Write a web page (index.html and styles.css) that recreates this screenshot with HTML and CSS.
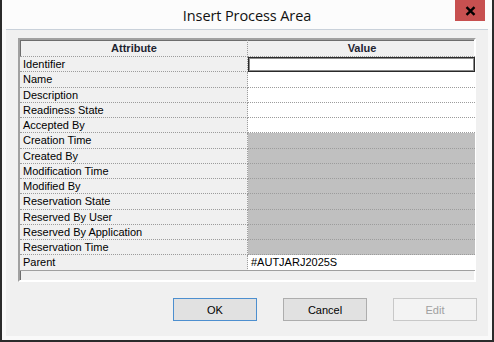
FILE: index.html
```html
<!DOCTYPE html>
<html lang="en">
<head>
    <meta charset="UTF-8">
    <meta name="viewport" content="width=device-width, initial-scale=1.0">
    <title>Insert Process Area</title>
    <link rel="stylesheet" href="styles.css">
</head>
<body>
    <div class="window">
        <div class="titlebar">
            <span class="title">Insert Process Area</span>
            <button class="close" type="button" aria-label="Close">
                <svg width="11" height="10" viewBox="0 0 11 10">
                    <path d="M1.5 1.2 L9.5 8.8 M9.5 1.2 L1.5 8.8" stroke="#000" stroke-width="2.4" fill="none"/>
                </svg>
            </button>
        </div>
        <div class="client">
            <div class="grid-box">
                <div class="grid">
                    <div class="head">Attribute</div>
                    <div class="head">Value</div>

                    <div class="name">Identifier</div>
                    <div class="value"><div class="edit"></div></div>
                    <div class="name">Name</div>
                    <div class="value"></div>
                    <div class="name">Description</div>
                    <div class="value"></div>
                    <div class="name">Readiness State</div>
                    <div class="value"></div>
                    <div class="name">Accepted By</div>
                    <div class="value"></div>
                    <div class="name">Creation Time</div>
                    <div class="value readonly"></div>
                    <div class="name">Created By</div>
                    <div class="value readonly"></div>
                    <div class="name">Modification Time</div>
                    <div class="value readonly"></div>
                    <div class="name">Modified By</div>
                    <div class="value readonly"></div>
                    <div class="name">Reservation State</div>
                    <div class="value readonly"></div>
                    <div class="name">Reserved By User</div>
                    <div class="value readonly"></div>
                    <div class="name">Reserved By Application</div>
                    <div class="value readonly"></div>
                    <div class="name">Reservation Time</div>
                    <div class="value readonly"></div>
                    <div class="name last">Parent</div>
                    <div class="value last">#AUTJARJ2025S</div>
                </div>
            </div>
            <div class="buttons">
                <button type="button" class="btn default">OK</button>
                <button type="button" class="btn">Cancel</button>
                <button type="button" class="btn" disabled>Edit</button>
            </div>
        </div>
    </div>
</body>
</html>
```

FILE: styles.css
```css
body {
    margin: 0;
    font-family: "Liberation Sans", Arial, sans-serif;
    background: #fff;
}
.window {
    width: 494px;
    height: 342px;
    box-sizing: border-box;
    border: 2px solid #2b2b2b;
    border-top: none;
    background: #f9f9f9;
    display: flex;
    flex-direction: column;
}
.titlebar {
    position: relative;
    height: 29px;
    background: #fcfcfc;
    display: flex;
    justify-content: center;
}
.title {
    font-family: "Open Sans", "Noto Sans", sans-serif;
    font-size: 14.5px;
    letter-spacing: -0.1px;
    line-height: 31px;
    color: #111;
}
.close {
    position: absolute;
    top: 0;
    right: 7px;
    width: 30px;
    height: 21px;
    padding: 0;
    border: none;
    background: #c75050;
    display: flex;
    align-items: center;
    justify-content: center;
}
.client {
    flex: 1;
    margin: 0 4px 4px;
    border-top: 1px solid #c9d1da;
    background: #f0f0f0;
    padding: 8px 10px 0 12px;
}
.grid-box {
    width: 458px;
    height: 244px;
    box-sizing: border-box;
    border: 2px solid;
    border-color: #a0a0a0 #ffffff #ffffff #a0a0a0;
    box-shadow: inset 1px 1px 0 #6d6d6d;
    background: #f0f0f0;
}
.grid {
    display: grid;
    grid-template-columns: 228px 227px;
    grid-template-rows: 17px;
    grid-auto-rows: 15.25px;
    font-size: 11px;
    color: #000;
}
.grid > div {
    box-sizing: border-box;
    border-bottom: 1px dotted #9c9c9c;
    line-height: 14px;
    white-space: nowrap;
}
.head {
    font-weight: bold;
    text-align: center;
    color: #1e2430;
    line-height: 16px !important;
    padding-left: 1px;
}
.head:first-child, .name {
    border-right: 1px dotted #9c9c9c;
}
.name {
    padding-left: 3px;
    background: #f0f0f0;
}
.value {
    background: #fff;
    padding-left: 3px;
}
.value.readonly {
    background: #c0c0c0;
}
.grid > .last {
    border-bottom: 1px solid #a0a0a0;
}
.value .edit {
    margin: 0 0 0 -3px;
    height: 15px;
    box-sizing: border-box;
    border: 1px solid #2a2a2a;
    box-shadow: inset 0 0 0 1px #8a8a8a;
    background: #fff;
}
.buttons {
    display: flex;
    justify-content: flex-end;
    gap: 26px;
    margin-top: 16px;
    width: 459px;
}
.btn {
    width: 84px;
    height: 23px;
    font-family: "Liberation Sans", Arial, sans-serif;
    font-size: 11px;
    color: #000;
    background: #e1e1e1;
    border: 1px solid #adadad;
    padding: 0;
}
.btn.default {
    border-color: #4d8fcf;
}
.btn:disabled {
    background: #f3f3f3;
    border-color: #c8c8c8;
    color: #a0a0a0;
}
```
